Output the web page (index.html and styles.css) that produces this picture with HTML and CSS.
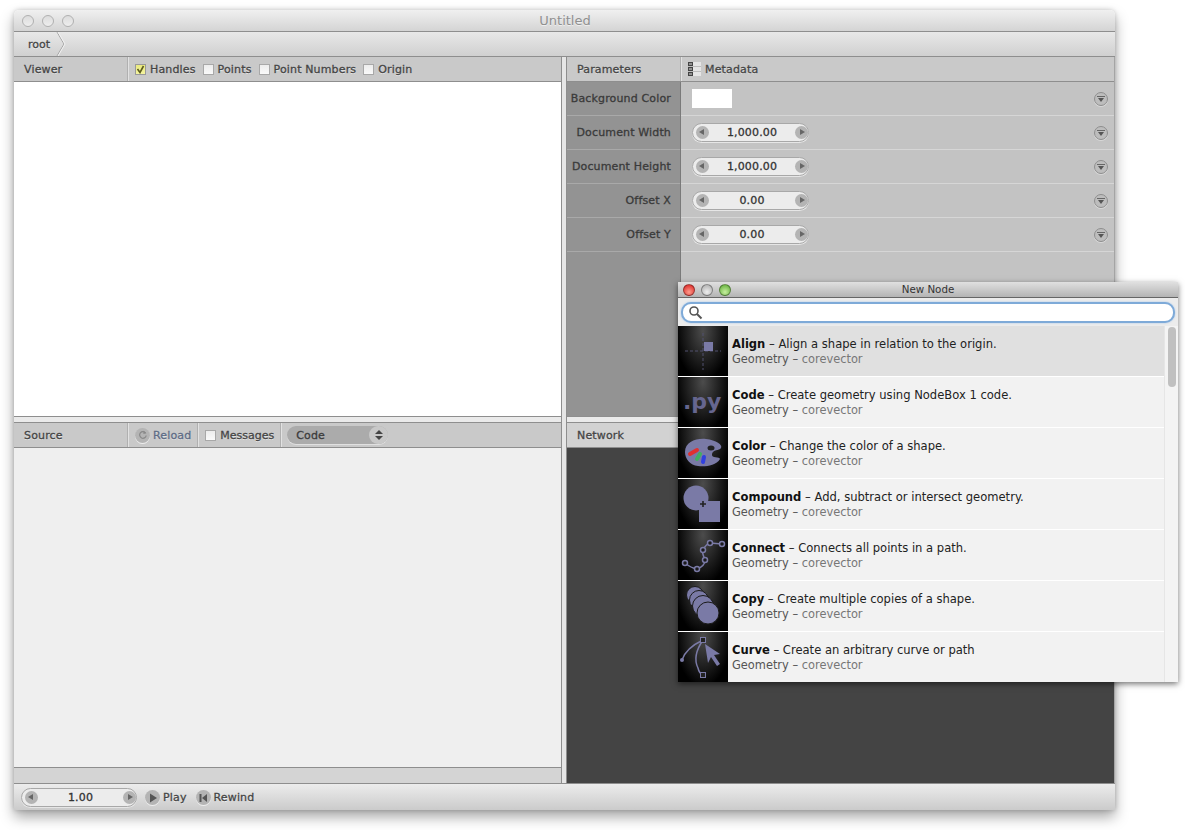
FILE: index.html
```html
<!DOCTYPE html>
<html lang="en">

<head>
  <meta charset="UTF-8">
  <link rel="stylesheet" href="styles.css">
  <title>Untitled</title>
</head>

<body>
  <div class="window">
    <div class="titlebar">
      <span class="light"></span><span class="light"></span><span class="light"></span>
      <span class="title">Untitled</span>
    </div>
    <div class="pathbar">
      <span class="crumb">root</span>
      <svg class="crumb-arrow" width="10" height="24" viewBox="0 0 10 24"><path d="M1 0 L8 12 L1 24" fill="none" stroke="#a4a4a4"/><path d="M2 0 L9 12 L2 24" fill="none" stroke="#f2f2f2"/></svg>
    </div>

    <div class="panes">
      <div class="col col-left">
        <div class="pane-top">
          <div class="header">
            <span class="head-title">Viewer</span>
            <span class="divider"></span>
            <span class="check on"><svg width="9" height="9" viewBox="0 0 9 9"><path d="M1.500 4 L4 7.500 L7.500 1" fill="none" stroke="#5c5c20" stroke-width="1.600"/></svg></span>
            <span class="label">Handles</span>
            <span class="check"></span>
            <span class="label">Points</span>
            <span class="check"></span>
            <span class="label">Point Numbers</span>
            <span class="check"></span>
            <span class="label">Origin</span>
          </div>
          <div class="viewer"></div>
        </div>
        <div class="splitter"></div>
        <div class="pane-bottom">
          <div class="header">
            <span class="head-title">Source</span>
            <span class="divider"></span>
            <span class="round-btn reload"><svg width="10" height="10" viewBox="0 0 10 10"><path d="M7.600 3 A3.300 3.300 0 1 0 8.200 5.500" fill="none" stroke="#888" stroke-width="1.200"/><path d="M5.600 0.800 L8.400 3.200 L5.400 4 Z" fill="#888"/></svg></span>
            <span class="label reload-label">Reload</span>
            <span class="divider"></span>
            <span class="check check-msg"></span>
            <span class="label msg-label">Messages</span>
            <span class="divider div-code"></span>
            <span class="select">Code
              <span class="select-btn"><svg width="10" height="12" viewBox="0 0 10 12"><path d="M5 1 L9 5 H1 Z M5 11 L9 7 H1 Z" fill="#444"/></svg></span>
            </span>
          </div>
          <div class="source"></div>
          <div class="strip"></div>
        </div>
      </div>

      <div class="col col-right">
        <div class="pane-top">
          <div class="header">
            <span class="head-title">Parameters</span>
            <span class="divider"></span>
            <svg class="meta-icon" width="13" height="14" viewBox="0 0 13 14"><rect width="13" height="14" fill="#e6e6e6"/><rect width="5" height="14" fill="#444"/><path d="M0 4.500H13M0 9.500H13" stroke="#bdbdbd"/><path d="M1 2H4M1 7H4M1 12H4" stroke="#ddd"/></svg>
            <span class="label">Metadata</span>
          </div>
          <div class="params">
            <div class="labels">
              <div class="plabel">Background Color</div>
              <div class="plabel">Document Width</div>
              <div class="plabel">Document Height</div>
              <div class="plabel">Offset X</div>
              <div class="plabel">Offset Y</div>
            </div>
            <div class="values">
              <div class="pvalue"><span class="swatch"></span><span class="menu-btn"></span></div>
              <div class="pvalue">
                <span class="stepper"><span class="arrow left"></span><span class="num">1,000.00</span><span class="arrow right"></span></span>
                <span class="menu-btn"></span>
              </div>
              <div class="pvalue">
                <span class="stepper"><span class="arrow left"></span><span class="num">1,000.00</span><span class="arrow right"></span></span>
                <span class="menu-btn"></span>
              </div>
              <div class="pvalue">
                <span class="stepper"><span class="arrow left"></span><span class="num">0.00</span><span class="arrow right"></span></span>
                <span class="menu-btn"></span>
              </div>
              <div class="pvalue">
                <span class="stepper"><span class="arrow left"></span><span class="num">0.00</span><span class="arrow right"></span></span>
                <span class="menu-btn"></span>
              </div>
            </div>
          </div>
        </div>
        <div class="splitter"></div>
        <div class="pane-bottom">
          <div class="header header-net">
            <span class="head-title">Network</span>
          </div>
          <div class="network"></div>
        </div>
      </div>
    </div>

    <div class="bottombar">
      <span class="stepper"><span class="arrow left"></span><span class="num">1.00</span><span class="arrow right"></span></span>
      <span class="round-btn play"><svg width="10" height="10" viewBox="0 0 10 10"><path d="M2 0.500 L9 5 L2 9.500 Z" fill="#555"/></svg></span>
      <span class="label">Play</span>
      <span class="round-btn rewind"><svg width="10" height="10" viewBox="0 0 10 10"><path d="M1.500 1H3.500V9H1.500Z M9 1 L4 5 L9 9 Z" fill="#555"/></svg></span>
      <span class="label">Rewind</span>
    </div>
  </div>

  <div class="node-window">
    <div class="node-title">
      <span class="dot red"></span><span class="dot grey"></span><span class="dot green"></span>
      <span class="node-title-text">New Node</span>
    </div>
    <div class="search-row">
      <div class="search">
        <svg width="15" height="15" viewBox="0 0 15 15"><circle cx="6" cy="6" r="4" fill="none" stroke="#555" stroke-width="1.600"/><path d="M9 9 L13.500 13.500" stroke="#555" stroke-width="2"/></svg>
      </div>
    </div>
    <div class="node-list">
      <div class="rows">
        <div class="row selected">
          <svg class="thumb" width="50" height="50" viewBox="0 0 50 50">
            <path d="M25 7V44M7 25H43" stroke="#50506e" stroke-dasharray="3 2"/>
            <rect x="26" y="16" width="9" height="9" fill="#7a7aa6"/>
          </svg>
          <div class="info"><div class="name"><b>Align</b> – Align a shape in relation to the origin.</div><div class="sub">Geometry – <span>corevector</span></div></div>
        </div>
        <div class="row">
          <svg class="thumb" width="50" height="50" viewBox="0 0 50 50">
            <text class="py" x="5" y="32">.py</text>
          </svg>
          <div class="info"><div class="name"><b>Code</b> – Create geometry using NodeBox 1 code.</div><div class="sub">Geometry – <span>corevector</span></div></div>
        </div>
        <div class="row">
          <svg class="thumb" width="50" height="50" viewBox="0 0 50 50">
            <path d="M7 24C7 14 18 10 28 11C38 12 45 17 43 20C41 23 35 21 34 26C33 31 42 28 42 31C38 38 26 39 20 38C12 37 7 31 7 24Z" fill="#7a7aa6"/>
            <ellipse cx="33" cy="20" rx="3.500" ry="2.500" fill="#222"/>
            <path d="M12 26L19 22" stroke="#e03030" stroke-width="4" stroke-linecap="round"/>
            <path d="M19 31L22 26" stroke="#40b060" stroke-width="4" stroke-linecap="round"/>
            <path d="M25 34L26 29" stroke="#3040e0" stroke-width="4" stroke-linecap="round"/>
          </svg>
          <div class="info"><div class="name"><b>Color</b> – Change the color of a shape.</div><div class="sub">Geometry – <span>corevector</span></div></div>
        </div>
        <div class="row">
          <svg class="thumb" width="50" height="50" viewBox="0 0 50 50">
            <circle cx="18" cy="19" r="12.500" fill="#7a7aa6"/>
            <rect x="21" y="22" width="21" height="21" fill="#7a7aa6"/>
            <path d="M25 22V28M22 25H28" stroke="#222" stroke-width="1.600"/>
          </svg>
          <div class="info"><div class="name"><b>Compound</b> – Add, subtract or intersect geometry.</div><div class="sub">Geometry – <span>corevector</span></div></div>
        </div>
        <div class="row">
          <svg class="thumb" width="50" height="50" viewBox="0 0 50 50">
            <path d="M7 33Q13 38 19 39Q27 36 27 30Q23 20 25 20Q28 14 32 13L44 14" fill="none" stroke="#7a7aa6" stroke-width="1.500"/>
            <g fill="#1a1a1a" stroke="#7a7aa6" stroke-width="1.500">
              <circle cx="7" cy="33" r="2.500"/><circle cx="19" cy="39" r="2.500"/><circle cx="27" cy="30" r="2.500"/><circle cx="25" cy="20" r="2.500"/><circle cx="32" cy="13" r="2.500"/><circle cx="44" cy="14" r="2.500"/>
            </g>
          </svg>
          <div class="info"><div class="name"><b>Connect</b> – Connects all points in a path.</div><div class="sub">Geometry – <span>corevector</span></div></div>
        </div>
        <div class="row">
          <svg class="thumb" width="50" height="50" viewBox="0 0 50 50">
            <g fill="#7a7aa6" stroke="#1a1a1a" stroke-width="1">
              <circle cx="17" cy="14" r="8.500"/><circle cx="21" cy="19" r="9.500"/><circle cx="25" cy="25" r="10.500"/><circle cx="30" cy="32" r="11"/>
            </g>
          </svg>
          <div class="info"><div class="name"><b>Copy</b> – Create multiple copies of a shape.</div><div class="sub">Geometry – <span>corevector</span></div></div>
        </div>
        <div class="row">
          <svg class="thumb" width="50" height="50" viewBox="0 0 50 50">
            <path d="M25 8Q8 16 4 28M25 8Q14 24 20 36Q21 41 25 43" fill="none" stroke="#7a7aa6" stroke-width="1.500"/>
            <path d="M27 12L30 31L33 25L39 34L42 32L36 23L42 22Z" fill="#7a7aa6"/>
            <rect x="22.500" y="5.500" width="5" height="5" fill="#222" stroke="#7a7aa6"/>
            <rect x="22.500" y="40.500" width="5" height="5" fill="#222" stroke="#7a7aa6"/>
            <circle cx="4" cy="28" r="2" fill="#7a7aa6"/>
          </svg>
          <div class="info"><div class="name"><b>Curve</b> – Create an arbitrary curve or path</div><div class="sub">Geometry – <span>corevector</span></div></div>
        </div>
      </div>
      <div class="scrollbar"><div class="scroll-thumb"></div></div>
    </div>
  </div>
</body>

</html>
```

FILE: styles.css
```css
* {
  box-sizing: border-box;
}

body {
  margin: 0;
  width: 1185px;
  height: 830px;
  overflow: hidden;
  position: relative;
  background-color: #fff;
  font-family: 'DejaVu Sans', sans-serif;
  font-size: 11px;
  color: #333;
}

/* main window */
.window {
  width: 1101px;
  height: 800px;
  margin: 10px 0 0 14px;
  display: flex;
  flex-direction: column;
  border-radius: 5px 5px 0 0;
  overflow: hidden;
  box-shadow: 0 7px 14px rgba(0, 0, 0, 0.35), 0 0 5px rgba(0, 0, 0, 0.2);
}

.titlebar {
  height: 22px;
  flex: none;
  display: flex;
  align-items: center;
  padding-left: 8px;
  gap: 8px;
  position: relative;
  background: linear-gradient(#f0f0f0, #d4d4d4);
  border-bottom: 1px solid #8e8e8e;
}

.light {
  width: 12px;
  height: 12px;
  border-radius: 50%;
  border: 1px solid #b0b0b0;
  background: linear-gradient(#dcdcdc, #eee);
}

.title {
  position: absolute;
  left: 1px;
  right: 0;
  top: 3px;
  text-align: center;
  font-size: 13px;
  color: #909090;
  text-shadow: 0 1px 0 #eee;
}

.pathbar {
  height: 25px;
  flex: none;
  display: flex;
  align-items: center;
  background: linear-gradient(#e8e8e8, #d0d0d0);
  border-bottom: 1px solid #8e8e8e;
}

.crumb {
  margin-left: 14px;
  -webkit-text-stroke: 0.3px #444;
  color: #444;
  text-shadow: 0 1px 0 #f4f4f4;
}

.crumb-arrow {
  margin-left: 6px;
}

.panes {
  flex: 1;
  display: flex;
  background-color: #e6e6e6;
  min-height: 0;
}

.col {
  display: flex;
  flex-direction: column;
}

.col-left {
  width: 548px;
  border-right: 1px solid #8e8e8e;
}

.col-right {
  width: 549px;
  margin-left: 4px;
  border-left: 1px solid #8e8e8e;
  border-right: 1px solid #a4a4a4;
}

.pane-top {
  height: 359px;
  flex: none;
  display: flex;
  flex-direction: column;
}

.splitter {
  height: 7px;
  flex: none;
  background-color: #eaeaea;
  border-top: 1px solid #8e8e8e;
  border-bottom: 1px solid #8e8e8e;
}

.pane-bottom {
  flex: 1;
  display: flex;
  flex-direction: column;
  min-height: 0;
}

.header {
  height: 25px;
  flex: none;
  display: flex;
  align-items: center;
  padding-left: 10px;
  background-color: #c9c9c9;
  border-bottom: 1px solid #8e8e8e;
}

.header-net {
  background-color: #d2d2d2;
}

.head-title,
.label,
.plabel,
.num,
.select {
  -webkit-text-stroke: 0.3px currentColor;
  letter-spacing: 0.15px;
  white-space: nowrap;
}

.head-title {
  width: 103px;
  flex: none;
  color: #444;
  text-shadow: 0 1px 0 #e4e4e4;
}

.divider {
  width: 2px;
  height: 24px;
  flex: none;
  background-color: #b0b0b0;
  border-right: 1px solid #e2e2e2;
}

.label {
  color: #444;
  text-shadow: 0 1px 0 #e4e4e4;
}

.check {
  width: 11px;
  height: 11px;
  flex: none;
  margin-left: 7px;
  margin-right: 4px;
  display: flex;
  align-items: center;
  justify-content: center;
  background: linear-gradient(#ececec, #fafafa);
  border: 1px solid #a8a8a8;
}

.check.on {
  margin-left: 6px;
  background: linear-gradient(#eaea80, #f4f4a0);
  border-color: #999;
}

.viewer {
  flex: 1;
  background-color: #fff;
}

.source {
  flex: 1;
  background-color: #efefef;
}

.strip {
  height: 16px;
  flex: none;
  background-color: #d4d4d4;
  border-top: 1px solid #8e8e8e;
}

.network {
  flex: 1;
  background-color: #444;
}

.round-btn {
  width: 15px;
  height: 15px;
  flex: none;
  border-radius: 50%;
  display: flex;
  align-items: center;
  justify-content: center;
  background-color: #b4b4b4;
  box-shadow: 0 1px 0 #eee;
}

.reload {
  margin-left: 6px;
  margin-right: 3px;
}

.reload-label {
  margin-right: 6px;
  color: #5d6b85;
}

.check-msg {
  margin-left: 6px;
}

.msg-label {
  letter-spacing: 0;
}

.div-code {
  margin-left: 6px;
}

.select {
  width: 101px;
  height: 18px;
  margin-left: 5px;
  padding-left: 9px;
  display: flex;
  align-items: center;
  justify-content: space-between;
  border-radius: 9px;
  background-color: #ababab;
  color: #3c3c3c;
  box-shadow: 0 1px 0 #e0e0e0;
}

.select-btn {
  width: 19px;
  height: 18px;
  display: flex;
  align-items: center;
  justify-content: center;
  border-radius: 9px;
  background-color: #c8c8c8;
}

.meta-icon {
  flex: none;
  margin: 0 4px 0 6px;
}

/* parameters */
.params {
  flex: 1;
  display: flex;
  min-height: 0;
}

.labels {
  width: 114px;
  flex: none;
  background-color: #939393;
  border-right: 1px solid #7a7a7a;
}

.plabel {
  height: 34px;
  padding: 0 9px 0 0;
  display: flex;
  align-items: center;
  justify-content: flex-end;
  color: #3a3a3a;
  border-bottom: 1px solid #a9a9a9;
}

.values {
  flex: 1;
  background-color: #c3c3c3;
}

.pvalue {
  height: 34px;
  display: flex;
  align-items: center;
  justify-content: space-between;
  padding: 0 6px 0 11px;
  border-bottom: 1px solid #d6d6d6;
}

.swatch {
  width: 40px;
  height: 19px;
  background-color: #fff;
}

.menu-btn {
  width: 14px;
  height: 14px;
  border-radius: 50%;
  position: relative;
  background-color: #bdbdbd;
  border: 1px solid #8e8e8e;
  box-shadow: 0 1px 0 #d8d8d8;
}

.menu-btn::before {
  content: "";
  position: absolute;
  left: 2px;
  top: 3px;
  width: 8px;
  height: 1px;
  background-color: #666;
}

.menu-btn::after {
  content: "";
  position: absolute;
  left: 3px;
  top: 5px;
  border-top: 4px solid #555;
  border-left: 3px solid transparent;
  border-right: 3px solid transparent;
}

.stepper {
  width: 117px;
  height: 19px;
  flex: none;
  display: flex;
  align-items: center;
  justify-content: space-between;
  border-radius: 10px;
  background-color: #ececec;
  border: 1px solid #a8a8a8;
  box-shadow: 0 1px 0 #e6e6e6;
}

.num {
  color: #333;
}

.arrow {
  width: 13px;
  height: 13px;
  border-radius: 50%;
  position: relative;
  background-color: #b4b4b4;
}

.arrow.left {
  margin-left: 3px;
}

.arrow::after {
  content: "";
  position: absolute;
  top: 3px;
  border-top: 3.500px solid transparent;
  border-bottom: 3.500px solid transparent;
}

.arrow.left::after {
  left: 3px;
  border-right: 5px solid #666;
}

.arrow.right::after {
  left: 5px;
  border-left: 5px solid #666;
}

/* bottom bar */
.bottombar {
  height: 27px;
  flex: none;
  display: flex;
  align-items: center;
  padding: 1px 0 0 7px;
  background: linear-gradient(#ececec, #cbcbcb);
  border-top: 1px solid #8e8e8e;
}

.bottombar .stepper {
  width: 116px;
}

.bottombar .label {
  text-shadow: 0 1px 0 #f4f4f4;
}

.play {
  margin-left: 8px;
  margin-right: 3px;
}

.rewind {
  margin-left: 9px;
  margin-right: 3px;
}

/* floating new node window */
.node-window {
  position: absolute;
  left: 678px;
  top: 282px;
  width: 500px;
  height: 400px;
  display: flex;
  flex-direction: column;
  background-color: #f2f2f2;
  box-shadow: 0 2px 6px rgba(0, 0, 0, 0.55);
}

.node-title {
  height: 16px;
  flex: none;
  display: flex;
  align-items: center;
  padding-left: 5px;
  gap: 6px;
  position: relative;
  background: linear-gradient(#e0e0e0, #b4b4b4);
  border-bottom: 1px solid #666;
}

.node-title-text {
  position: absolute;
  left: 0;
  right: 0;
  top: 1px;
  text-align: center;
  font-size: 10.3px;
  color: #333;
}

.dot {
  width: 12px;
  height: 12px;
  border-radius: 50%;
  border: 1px solid rgba(0, 0, 0, 0.35);
}

.red { background: radial-gradient(circle at 50% 70%, #ff9c8c, #d81c1c); }
.grey { background: radial-gradient(circle at 50% 70%, #eee, #a8a8a8); }
.green { background: radial-gradient(circle at 50% 70%, #c8f0a0, #58a830); }

.search-row {
  height: 28px;
  flex: none;
  padding: 4px 3px 0;
  background-color: #ececec;
}

.search {
  height: 21px;
  display: flex;
  align-items: center;
  padding-left: 5px;
  background-color: #fff;
  border-radius: 10px;
  border: 2px solid #7eaad8;
  box-shadow: 0 0 2px #9cc0ea;
}

.node-list {
  flex: 1;
  display: flex;
  min-height: 0;
}

.rows {
  width: 486px;
  height: 356px;
  overflow: hidden;
  flex: none;
}

.row {
  height: 51px;
  display: flex;
  align-items: center;
  background-color: #f2f2f2;
  border-bottom: 1px solid #fff;
}

.row.selected {
  background-color: #e0e0e0;
}

.thumb {
  flex: none;
  background: radial-gradient(ellipse at 50% 10%, #4c4c4c, #000 78%);
}

.py {
  font-family: 'DejaVu Sans', sans-serif;
  font-size: 22px;
  font-weight: bold;
  fill: #66668f;
}

.info {
  margin-left: 4px;
  padding-top: 1px;
  line-height: 16px;
  white-space: nowrap;
}

.name {
  font-size: 11.55px;
  color: #222;
}

.name b {
  color: #111;
}

.sub {
  margin-top: -1px;
  font-size: 11.4px;
  color: #555;
}

.sub span {
  color: #777;
}

.scrollbar {
  width: 14px;
  flex: none;
  padding-left: 3px;
  background-color: #f4f4f4;
  border-left: 1px solid #e6e6e6;
}

.scroll-thumb {
  width: 8px;
  height: 60px;
  margin-top: 1px;
  border-radius: 4px;
  background-color: #c0c0c0;
}
```
